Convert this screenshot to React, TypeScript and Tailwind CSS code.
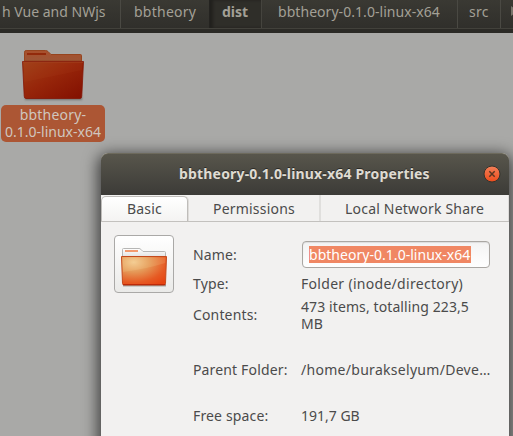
import React from "react";

function DesktopFolder() {
  return (
    <svg width="66" height="54" viewBox="0 0 66 54" className="block">
      <defs>
        <linearGradient id="deskFront" x1="0" y1="0" x2="1" y2="1">
          <stop offset="0" stopColor="#a04018" />
          <stop offset="0.45" stopColor="#97260a" />
          <stop offset="1" stopColor="#820f00" />
        </linearGradient>
        <linearGradient id="deskBack" x1="0" y1="0" x2="0" y2="1">
          <stop offset="0" stopColor="#a94f2b" />
          <stop offset="1" stopColor="#9c5637" />
        </linearGradient>
        <filter id="deskShade" x="-10%" y="-100%" width="120%" height="300%">
          <feGaussianBlur stdDeviation="0.8" />
        </filter>
      </defs>
      <rect x="4" y="49" width="57" height="2.6" fill="#44413e" opacity="0.7" filter="url(#deskShade)" />
      <path d="M3.5 13V4.2Q3.5 2.5 5.2 2.5H24.5Q26 2.5 27 3.5L30 6.5H59.5Q60.5 6.5 60.5 7.5V13Z" fill="url(#deskBack)" stroke="#96451f" />
      <rect x="6" y="5" width="19" height="2" fill="#922a0b" />
      <path d="M1.500 13.500H62.500L60.800 48Q60.700 50.500 59 50.500H5Q3.300 50.500 3.200 48Z" fill="url(#deskFront)" stroke="#841505" strokeWidth="0.8" />
      <path d="M2.500 14.500H61.500L61 22Q34 28 3.300 34Z" fill="#bb5a2d" opacity="0.09" />
      <path d="M2 14.300H62" stroke="#a54421" strokeWidth="0.7" />
    </svg>
  );
}

function PropertiesFolder() {
  return (
    <svg width="50" height="43" viewBox="0 0 50 43" className="block">
      <defs>
        <radialGradient id="propFront" cx="0.27" cy="0.2" r="0.95">
          <stop offset="0" stopColor="#f2c88f" />
          <stop offset="0.35" stopColor="#e59a59" />
          <stop offset="0.75" stopColor="#e65a23" />
          <stop offset="1" stopColor="#e64411" />
        </radialGradient>
        <linearGradient id="propBack" x1="0" y1="0" x2="0" y2="1">
          <stop offset="0" stopColor="#ffffff" />
          <stop offset="1" stopColor="#dededd" />
        </linearGradient>
        <filter id="propShade" x="-10%" y="-100%" width="120%" height="300%">
          <feGaussianBlur stdDeviation="0.7" />
        </filter>
      </defs>
      <rect x="4" y="38" width="43" height="2.400" fill="#777" opacity="0.7" filter="url(#propShade)" />
      <path d="M3.500 12V3.500Q3.500 2.500 4.500 2.500H20Q21 2.500 21.800 3.300L24 5.500H45.500Q46.500 5.500 46.500 6.500V12Z" fill="url(#propBack)" stroke="#b6b6b5" />
      <rect x="6" y="4" width="13" height="2" fill="#f39a6e" />
      <path d="M2.500 10.500H47.500L46.500 37.500Q46.400 39 45 39H5Q3.600 39 3.500 37.500Z" fill="url(#propFront)" stroke="#c44a1c" />
      <path d="M3.500 11.500H46.500L46.200 17Q27 23 4 26Z" fill="#fff0b0" opacity="0.14" />
      <path d="M4 38.500H46" stroke="#bd2909" />
    </svg>
  );
}

function PathBar() {
  return (
    <header className="h-[33px] border-b-4 border-[#2b2a26] bg-[#33322e] text-[#a3a096]">
      <nav className="flex h-[29px] overflow-hidden border-b border-[#42413b] bg-linear-to-b from-[#3a3933] to-[#302f2b] leading-5">
        <div className="w-[121px] shrink-0 border-r border-[#4a4943] pt-[2px] pl-[2px]">h Vue and NWjs</div>
        <div className="w-[89px] shrink-0 border-r border-[#242320] pt-[2px] pl-[13px] tracking-[0.25px]">bbtheory</div>
        <div className="w-[52px] shrink-0 border-r border-[#45443e] bg-[#2f2e29] pt-[2px] pl-[12px] font-bold shadow-[inset_3px_0_3px_#22211e]">dist</div>
        <div className="w-[196px] shrink-0 border-r border-[#4a4943] pt-[2px] pl-[16px] tracking-[0.05px]">bbtheory-0.1.0-linux-x64</div>
        <div className="w-[43px] shrink-0 border-r border-[#4a4943] pt-[2px] pl-[11px] tracking-[0.25px]">src</div>
        <div className="flex grow items-start justify-end pt-[6px]">
          <svg width="2" height="10"><path d="M0 0L2 1.500V8.500L0 10Z" fill="#77746b" /></svg>
        </div>
      </nav>
    </header>
  );
}

function Row({ label, children, className }: { label: string; children: React.ReactNode; className: string }) {
  return (
    <div className={"flex " + className}>
      <div className="w-[108px] shrink-0 tracking-[0.15px]">{label}</div>
      <div className="whitespace-nowrap">{children}</div>
    </div>
  );
}

export default function App() {
  return (
    <main className="relative h-[436px] w-[513px] overflow-hidden bg-[#a9a9a7] font-['Noto_Sans',sans-serif] text-[14px] whitespace-nowrap">
      <PathBar />
      <div className="flex w-[107px] flex-col items-center pt-[15px]">
        <DesktopFolder />
        <div className="mt-[3px] ml-px h-[37px] w-[104px] self-start rounded-[5px] bg-[#ac5634] pt-px text-center leading-[17px] text-[#d0c6bf]">
          <span className="tracking-[0.2px]">bbtheory-</span><br />0.1.0-linux-x64
        </div>
      </div>

      <section className="absolute top-[153px] left-[101px] h-[320px] w-[408px] rounded-t-[7px] bg-[#f2f1f0] text-[#4b4b4b] shadow-[0_4px_15px_3px_rgba(0,0,0,0.65)]">
        <div className="relative h-[42px] rounded-t-[7px] border-t border-[#6d6a5c] bg-linear-to-b from-[#58564c] to-[#3c3b37] pt-[10px] pl-[78px] leading-5 font-bold tracking-[0.18px] text-[#dfdbd2] [text-shadow:0_-1px_0_#2b2a27]">
          bbtheory-0.1.0-linux-x64 Properties
          <svg width="18" height="18" viewBox="0 0 18 18" className="absolute top-[11px] left-[382px]">
            <defs>
              <linearGradient id="close" x1="0" y1="0" x2="0" y2="1">
                <stop offset="0" stopColor="#f28059" />
                <stop offset="1" stopColor="#ed4c1b" />
              </linearGradient>
            </defs>
            <circle cx="9" cy="9" r="8" fill="url(#close)" stroke="#33332d" />
            <path d="M6.300 6.300L11.700 11.700M11.700 6.300L6.300 11.700" stroke="#593621" strokeWidth="1.500" />
          </svg>
        </div>
        <nav className="flex h-[27px] border-b border-[#c3c1be] leading-5 tracking-[0.2px]">
          <div className="mt-px w-[87px] rounded-t-[5px] border border-b-0 border-[#bfbdba] bg-linear-to-b from-white to-[#f4f3f2] pt-[2px] pl-[25px] shadow-[1px_0_0_#dedcd9]">Basic</div>
          <div className="w-[133px] border-r-2 border-[#e0dfdd] pt-[4px] pl-[25px]">Permissions</div>
          <div className="w-[188px] border-r border-[#dddbd9] pt-[4px] pl-[24px]">Local Network Share</div>
        </nav>
        <div className="flex pt-[13px] pl-[13px]">
          <div className="flex h-[58px] w-[60px] justify-center rounded-[4px] border border-[#aaa9a7] bg-linear-to-b from-white to-[#eaeae8] pt-[10px]">
            <PropertiesFolder />
          </div>
          <div className="ml-[19px] pt-[6px] leading-5">
            <Row label="Name:" className="h-[33px] pt-[4px]">
              <div className="-mt-[4px] ml-px h-[27px] w-[188px] rounded-[4px] border border-[#aaa7a3] bg-linear-to-b from-[#f3f3f3] to-white pt-[4px] pl-[6px] shadow-[inset_0_1px_1px_#ddd]">
                <div className="h-[17px] w-[162px] bg-[#f08763] leading-[17px] tracking-[0.03px] text-white">bbtheory-0.1.0-linux-x64</div>
              </div>
            </Row>
            <Row label="Type:" className="h-[27px]"><span className="tracking-[0.3px]">Folder (inode/directory)</span></Row>
            <Row label="Contents:" className="h-[59px] pt-[4px]">
              <div className="-mt-[7px] leading-[17px] tracking-[0.1px]">473 items, totalling 223,5<br />MB</div>
            </Row>
            <Row label="Parent Folder:" className="h-[46px]"><span className="tracking-[0.29px]">/home/burakselyum/Deve…</span></Row>
            <Row label="Free space:" className="h-[20px]">191,7 GB</Row>
          </div>
        </div>
      </section>
    </main>
  );
}
